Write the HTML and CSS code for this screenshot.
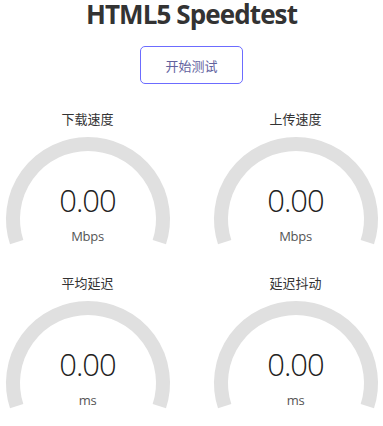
FILE: index.html
```html
<!DOCTYPE html>
<html lang="zh-CN">
<head>
<meta charset="utf-8">
<title>HTML5 Speedtest</title>
<link rel="stylesheet" href="styles.css">
</head>
<body>
<h1 class="title">HTML5 Speedtest</h1>
<div class="actions"><button class="start-btn" type="button">开始测试</button></div>
<div class="gauges">
  <div class="gauge">
    <div class="gauge-name">下载速度</div>
    <div class="dial">
      <svg class="arc" width="174" height="118" viewBox="0 0 174 118"><path d="M15.67 112.18 A75 75 0 1 1 158.33 112.18" fill="none" stroke="#e0e0e0" stroke-width="14"/></svg>
      <div class="readout"><div class="value">0.00</div><div class="unit">Mbps</div></div>
    </div>
  </div>
  <div class="gauge">
    <div class="gauge-name">上传速度</div>
    <div class="dial">
      <svg class="arc" width="174" height="118" viewBox="0 0 174 118"><path d="M15.67 112.18 A75 75 0 1 1 158.33 112.18" fill="none" stroke="#e0e0e0" stroke-width="14"/></svg>
      <div class="readout"><div class="value">0.00</div><div class="unit">Mbps</div></div>
    </div>
  </div>
  <div class="gauge">
    <div class="gauge-name">平均延迟</div>
    <div class="dial">
      <svg class="arc" width="174" height="118" viewBox="0 0 174 118"><path d="M15.67 112.18 A75 75 0 1 1 158.33 112.18" fill="none" stroke="#e0e0e0" stroke-width="14"/></svg>
      <div class="readout"><div class="value">0.00</div><div class="unit">ms</div></div>
    </div>
  </div>
  <div class="gauge">
    <div class="gauge-name">延迟抖动</div>
    <div class="dial">
      <svg class="arc" width="174" height="118" viewBox="0 0 174 118"><path d="M15.67 112.18 A75 75 0 1 1 158.33 112.18" fill="none" stroke="#e0e0e0" stroke-width="14"/></svg>
      <div class="readout"><div class="value">0.00</div><div class="unit">ms</div></div>
    </div>
  </div>
</div>
</body>
</html>
```
FILE: styles.css
```css
html, body {
  margin: 0;
  padding: 0;
  background: #ffffff;
}
body {
  font-family: "Open Sans", "Noto Sans CJK SC", sans-serif;
  color: #333333;
  text-align: center;
}
.title {
  margin: 0;
  padding-top: 1px;
  font-size: 26px;
  line-height: 26px;
  font-weight: 700;
  letter-spacing: -0.9px;
  color: #333333;
}
.actions {
  display: flex;
  justify-content: center;
  margin-top: 19px;
}
.start-btn {
  box-sizing: border-box;
  width: 103px;
  height: 38px;
  padding: 0;
  background: #ffffff;
  border: 1.5px solid #6c6cff;
  border-radius: 5px;
  font-family: "Noto Sans CJK SC", sans-serif;
  font-size: 13px;
  color: #62629e;
  cursor: pointer;
}
.gauges {
  display: grid;
  grid-template-columns: 174px 174px;
  column-gap: 34px;
  row-gap: 24px;
  justify-content: center;
  margin-top: 24px;
}
.gauge {
  display: flex;
  flex-direction: column;
  align-items: center;
}
.gauge-name {
  font-family: "Noto Sans CJK SC", sans-serif;
  font-size: 13px;
  line-height: 22px;
  color: #333333;
}
.dial {
  display: grid;
  width: 174px;
  height: 118px;
}
.arc, .readout {
  grid-area: 1 / 1;
}
.arc {
  display: block;
}
.readout {
  display: flex;
  flex-direction: column;
  align-items: center;
  padding-top: 54.5px;
}
.value {
  font-size: 31px;
  line-height: 31px;
  font-weight: 300;
  letter-spacing: -1px;
  color: #222222;
}
.unit {
  margin-top: 12.5px;
  font-size: 13px;
  line-height: 16px;
  letter-spacing: -0.3px;
  color: #555555;
}
```
